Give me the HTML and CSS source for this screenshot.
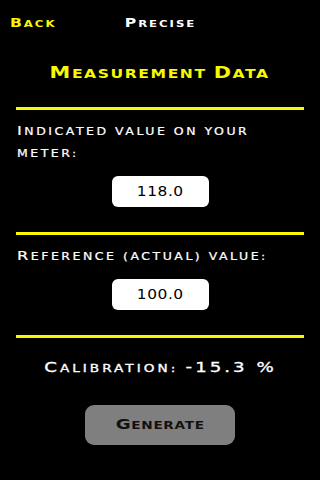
FILE: index.html
```html
<!DOCTYPE html>
<html lang="en">
<head>
<meta charset="UTF-8">
<meta name="viewport" content="width=device-width, initial-scale=1.0">
<title>Measurement Data</title>
<link rel="stylesheet" href="styles.css">
</head>
<body>
    <div class="top-bar">
        <a class="back-link"><span class="cap">B</span>ack</a>
        <div class="mode-title"><span class="cap">P</span>recise</div>
        <div></div>
    </div>

    <h1 class="page-title"><span class="wide"><span class="cap">M</span>easurement <span class="cap">D</span>ata</span></h1>

    <div class="rule"></div>
    <div class="field">
        <div class="field-label">Indicated value on your meter:</div>
        <div class="value-box"><span class="wide">118.0</span></div>
    </div>

    <div class="rule"></div>
    <div class="field">
        <div class="field-label">Reference (actual) value:</div>
        <div class="value-box"><span class="wide">100.0</span></div>
    </div>

    <div class="rule"></div>
    <div class="result"><span class="wide"><span class="cap">C</span>alibration: <span class="cap">-15.3 %</span></span></div>

    <div class="actions">
        <button class="generate-button"><span class="wide"><span class="cap">G</span>enerate</span></button>
    </div>
</body>
</html>
```

FILE: styles.css
```css
    body {
        margin: 0;
        padding: 0;
        width: 320px;
        height: 480px;
        background-color: black;
        color: white;
        font-family: "DejaVu Sans", Verdana, sans-serif;
        text-transform: uppercase;
        overflow: hidden;
    }

    /* initials and digits sit at full cap height, the rest is small caps */
    .cap { line-height: 0; }
    .top-bar .cap { font-size: 12px; }
    .page-title .cap { font-size: 16px; }
    .result .cap { font-size: 14px; }
    .generate-button .cap { font-size: 14px; }
    .field-label::first-letter { font-size: 12.5px; line-height: 0; }

    /* the original face is an extended one */
    .wide {
        display: inline-block;
        transform: scaleX(1.3);
    }

    .top-bar {
        display: grid;
        grid-template-columns: 1fr auto 1fr;
        padding: 16px 10px 0 10px;
        font-size: 9px;
        line-height: 16px;
        font-weight: bold;
        letter-spacing: 1.5px;
    }

    .back-link {
        color: #f8f800;
        justify-self: start;
        transform: scaleX(1.3);
        transform-origin: left center;
    }

    .mode-title {
        color: white;
        transform: scaleX(1.3);
    }

    .page-title {
        margin: 32px 0 0 0;
        text-align: center;
        color: #f8f800;
        font-size: 12px;
        line-height: 20px;
        letter-spacing: 1.2px;
    }

    .rule {
        height: 3px;
        margin: 23px 16px 0 16px;
        background-color: #f8f800;
    }

    .field + .rule {
        margin-top: 25px;
    }

    .field {
        padding: 0 17px;
        display: flex;
        flex-direction: column;
    }

    .field-label {
        align-self: flex-start;
        width: 220px;
        margin-top: 11px;
        font-size: 9.6px;
        line-height: 22px;
        letter-spacing: 1.95px;
        -webkit-text-stroke: 0.2px white;
        transform: scaleX(1.3);
        transform-origin: left center;
    }

    .value-box {
        align-self: center;
        width: 97px;
        height: 31px;
        margin: 11px 0 0 0;
        background-color: white;
        color: black;
        border-radius: 6px;
        text-align: center;
        line-height: 31px;
        font-size: 14px;
        letter-spacing: 0.5px;
    }

    .value-box .wide {
        transform: scaleX(1.1);
    }

    .result {
        margin-top: 20px;
        text-align: center;
        font-size: 10.5px;
        line-height: 20px;
        letter-spacing: 2.3px;
        -webkit-text-stroke: 0.3px white;
    }

    .actions {
        display: flex;
        justify-content: center;
        margin-top: 27px;
    }

    .generate-button {
        width: 150px;
        height: 40px;
        padding: 0;
        border: none;
        border-radius: 9px;
        background-color: #7f7f7f;
        color: #111;
        font-family: inherit;
        text-transform: uppercase;
        font-weight: bold;
        font-size: 10.5px;
        letter-spacing: 0.5px;
    }
```
